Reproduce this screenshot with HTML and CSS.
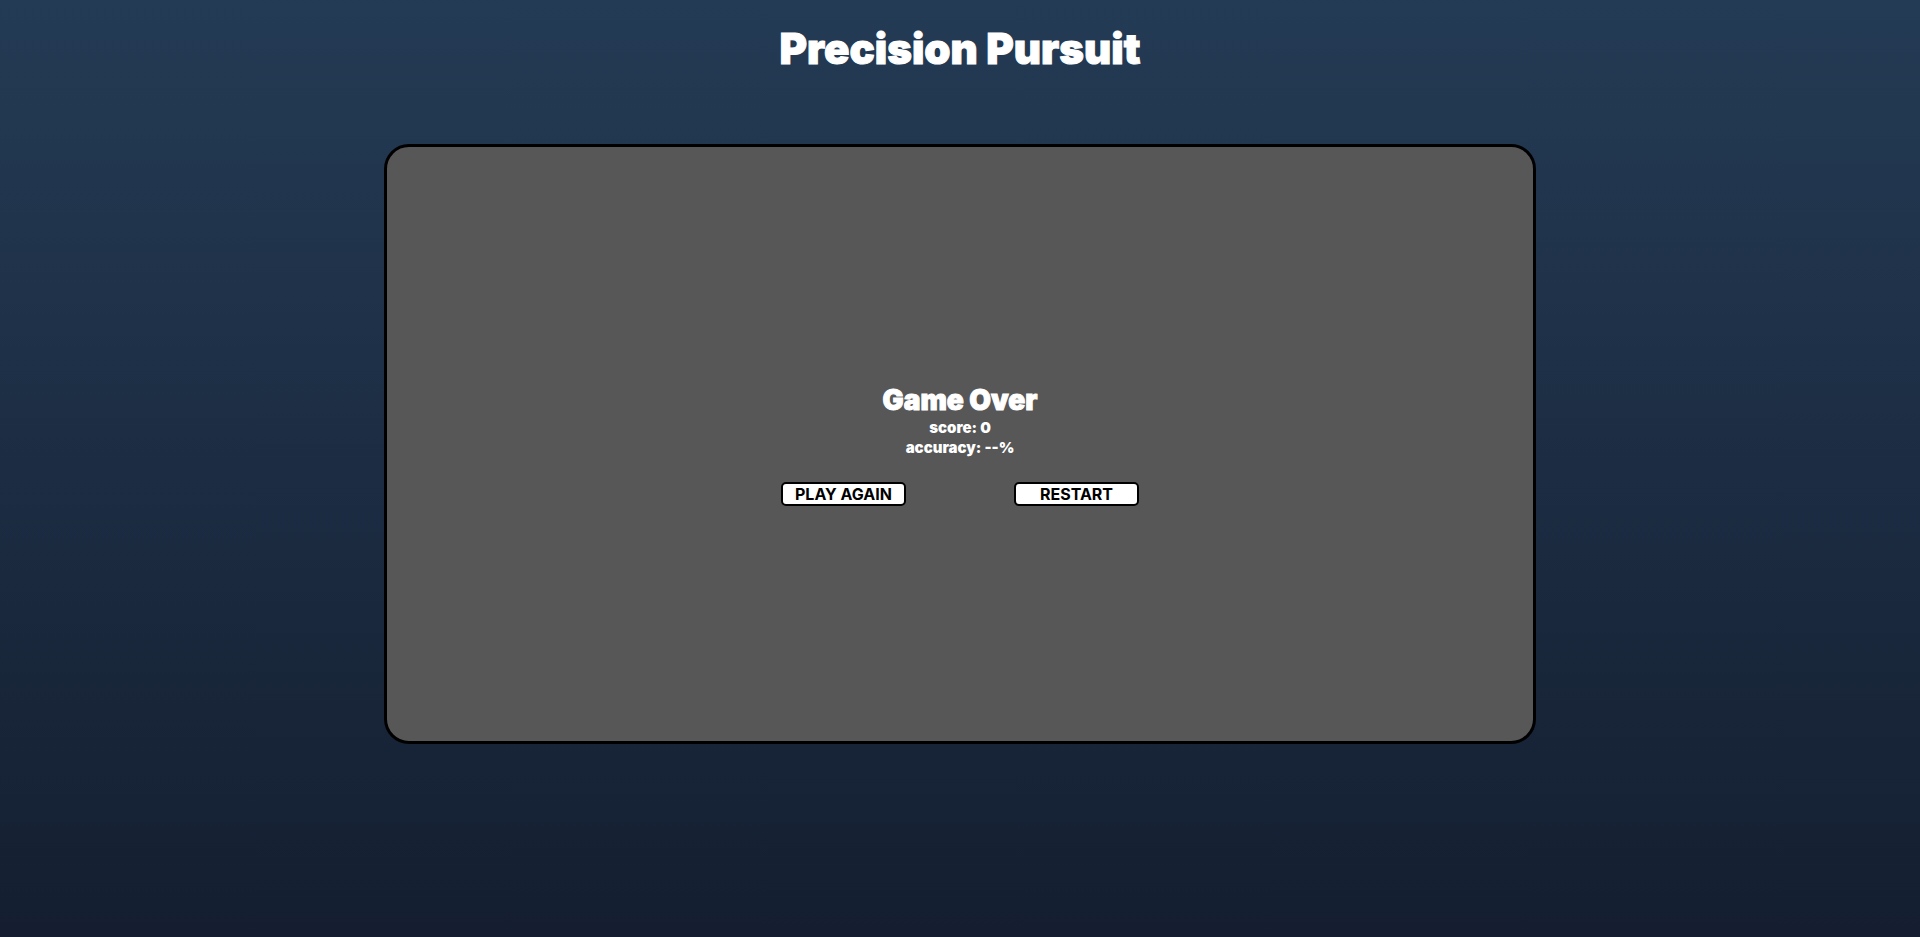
FILE: index.html
```html
<!DOCTYPE html>
<html lang="en">
<head>
<meta charset="utf-8">
<title>Precision Pursuit</title>
<link rel="stylesheet" href="styles.css">
</head>
<body>
<h1 class="title">Precision Pursuit</h1>
<main class="board">
<h2 class="heading">Game Over</h2>
<p class="stat">score: 0</p>
<p class="stat">accuracy: --%</p>
<div class="actions">
<button class="button" type="button">PLAY AGAIN</button>
<button class="button" type="button">RESTART</button>
</div>
</main>
</body>
</html>
```
FILE: styles.css
```css
* {
  box-sizing: border-box;
  margin: 0;
}

body {
  min-height: 100vh;
  display: flex;
  flex-direction: column;
  align-items: center;
  background: linear-gradient(to bottom, #243b55, #141e30);
  color: #fff;
  font-family: Inter, "Open Sans", sans-serif;
  font-weight: 900;
}

.title {
  margin: 24px 0 70px;
  font-size: 42px;
  line-height: 50px;
  font-weight: 900;
  -webkit-text-stroke: 1px #fff;
}

.board {
  width: 60%;
  min-height: 64vh;
  display: flex;
  flex-direction: column;
  align-items: center;
  justify-content: center;
  border: 3px solid #000;
  border-radius: 25px;
  background: #575757;
}

.heading {
  font-size: 28px;
  line-height: 36px;
  font-weight: 900;
  -webkit-text-stroke: 1px #fff;
}

.stat {
  font-size: 15px;
  line-height: 20px;
}

.actions {
  display: flex;
  gap: 108px;
  margin-top: 24px;
}

.button {
  width: 125px;
  height: 24px;
  padding: 0;
  border: 2px solid #000;
  border-radius: 5px;
  background: #fff;
  color: #000;
  font: 700 16px/20px Inter, sans-serif;
}
```
